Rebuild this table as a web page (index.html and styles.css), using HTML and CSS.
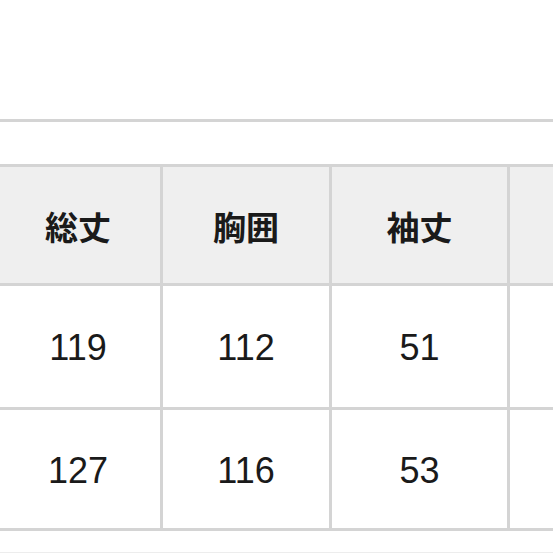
FILE: index.html
```html
<!DOCTYPE html>
<html lang="ja">
<head>
<meta charset="utf-8">
<link rel="stylesheet" href="styles.css">
</head>
<body>
<div class="page">
  <div class="rule"></div>
  <div class="table-wrap">
    <table class="size-table">
      <colgroup>
        <col class="c1"><col class="c2"><col class="c3"><col class="c4">
      </colgroup>
      <thead>
        <tr class="head-row"><th>総丈</th><th>胸囲</th><th>袖丈</th><th></th></tr>
      </thead>
      <tbody>
        <tr class="row-a"><td>119</td><td>112</td><td>51</td><td></td></tr>
        <tr class="row-b"><td>127</td><td>116</td><td>53</td><td></td></tr>
      </tbody>
    </table>
  </div>
  <div class="faint-rule"></div>
</div>
</body>
</html>
```

FILE: styles.css
```css
html, body {
  margin: 0;
  padding: 0;
  background: #ffffff;
}

.page {
  width: 553px;
  height: 553px;
  overflow: hidden;
  padding-top: 119px;
  box-sizing: border-box;
}

.rule {
  height: 3px;
  background: #d4d4d4;
}

.table-wrap {
  margin-top: 42px;
  width: 553px;
  overflow: hidden;
}

.size-table {
  border-collapse: separate;
  border-spacing: 0;
  table-layout: fixed;
  width: 688px;
  margin-left: -4px;
  border-top: 3px solid #d4d4d4;
  color: #1a1a1a;
}

.c1 { width: 167px; }
.c2 { width: 169px; }
.c3 { width: 178px; }
.c4 { width: 174px; }

.size-table th,
.size-table td {
  padding: 0;
  text-align: center;
  vertical-align: middle;
  border-right: 3px solid #d4d4d4;
  border-bottom: 3px solid #d4d4d4;
}

.size-table th {
  background: #efefef;
  font-family: "Noto Sans CJK JP", "Noto Sans", sans-serif;
  font-weight: 700;
  font-size: 33px;
  height: 116px;
  line-height: 1;
  padding-top: 2px;
}

.size-table td {
  background: #ffffff;
  font-family: "Liberation Sans", Arial, sans-serif;
  font-weight: 400;
  font-size: 36px;
  line-height: 1;
  padding-top: 3px;
}

.row-a td { height: 118px; }
.row-b td { height: 115px; }
.size-table th { height: 114px; }

.faint-rule {
  margin-top: 21px;
  height: 1px;
  background: #ededed;
}
```
